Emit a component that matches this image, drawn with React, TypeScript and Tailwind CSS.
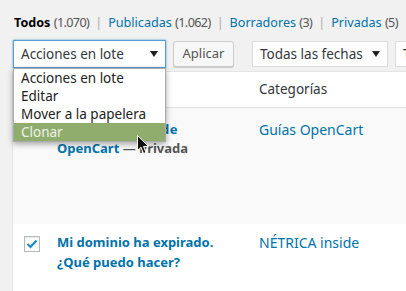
import React from 'react';

const font = { fontFamily: '"Noto Sans", "Open Sans", sans-serif' };

function Caret() {
  return (
    <svg width="8" height="6" viewBox="0 0 8 6" className="shrink-0">
      <path d="M0 0 L8 0 L4 6 Z" fill="#222" />
    </svg>
  );
}

function Cursor() {
  return (
    <svg width="13" height="20" viewBox="0 0 13 20" className="absolute left-[137px] top-[135px]">
      <path
        d="M0.5 0.5 L0.5 15.5 L4 12.2 L6.6 18.5 L9 17.5 L6.5 11.5 L11.5 11.5 Z"
        fill="#111"
        stroke="#fff"
        strokeWidth="1"
        strokeLinejoin="round"
      />
    </svg>
  );
}

const actions = ['Acciones en lote', 'Editar', 'Mover a la papelera', 'Clonar'];

export default function App() {
  return (
    <div className="relative w-[406px] h-[291px] overflow-hidden bg-[#f1f1f1] text-[#32373c]" style={font}>
      {/* Status filters */}
      <div className="pt-[14px] pl-[14px] h-[32px] text-[12.6px] leading-[18px] whitespace-nowrap">
        <span className="font-bold text-black">Todos</span> <span className="text-[#555] tracking-[-0.6px]">(1.070)</span>
        <span className="text-[#aaa] mx-[6px]">|</span>
        <span className="text-[#0073aa]">Publicadas <span className="text-[#555] tracking-[-0.6px]">(1.062)</span></span>
        <span className="text-[#aaa] mx-[6px]">|</span>
        <span className="text-[#0073aa]">Borradores <span className="text-[#555] tracking-[-0.6px]">(3)</span></span>
        <span className="text-[#aaa] mx-[6px]">|</span>
        <span className="text-[#0073aa]">Privadas <span className="text-[#555] tracking-[-0.6px]">(5)</span></span>
      </div>

      {/* Bulk actions bar */}
      <div className="mt-[8px] flex items-center pl-[13px] whitespace-nowrap">
        <div className="shrink-0 w-[153px] h-[28px] flex items-center justify-between pl-[7px] pr-[7px] bg-white border border-[#5b9dd9] shadow-[0_0_2px_rgba(30,140,190,0.8)] text-[13.5px] text-[#32373c]">
          <span>Acciones en lote</span>
          <Caret />
        </div>
        <div className="shrink-0 ml-[7px] w-[61px] h-[26px] flex items-center justify-center bg-[#f7f7f7] border border-[#ccc] rounded-[3px] shadow-[0_1px_0_#ccc] text-[13px] text-[#555]">
          Aplicar
        </div>
        <div className="shrink-0 ml-[18px] w-[136px] h-[26px] flex items-center justify-between pl-[7px] pr-[7px] bg-white border border-[#ddd] text-[13.5px] text-[#32373c]">
          <span>Todas las fechas</span>
          <Caret />
        </div>
        <div className="shrink-0 ml-[7px] w-[60px] h-[26px] flex items-center pl-[7px] bg-white border border-[#ddd] text-[13.5px]">
          T
        </div>
      </div>

      {/* Posts table */}
      <div className="mt-[3px] ml-[12px] w-[420px] bg-white border-l border-t border-[#e5e5e5]">
        <div className="h-[36px] flex items-center border-b border-[#e1e1e1] text-[13.5px] text-[#32373c]">
          <div className="shrink-0 w-[234px]" />
          <div className="pl-[12px]">Categorías</div>
        </div>
        <div className="h-[116px] flex bg-[#f9f9f9] pt-[12px]">
          <div className="shrink-0 w-[44px]" />
          <div className="shrink-0 w-[190px] text-[13px] leading-[19px] font-bold text-[#0073aa]">
            <span className="tracking-[0.4px]">Instalar temas de</span>
            <br />
            OpenCart <span className="text-[#555]">— Privada</span>
          </div>
          <div className="pl-[12px] text-[14px] leading-[19px] text-[#0073aa]">Guías OpenCart</div>
        </div>
        <div className="h-[80px] flex bg-white pt-[8px]">
          <div className="shrink-0 w-[44px] pl-[11px] pt-[4px]">
            <div className="w-[16px] h-[16px] border border-[#b4b9be] bg-white flex items-center justify-center shadow-[inset_0_1px_2px_rgba(0,0,0,0.1)]">
              <svg width="12" height="10" viewBox="0 0 12 10">
                <path d="M1.5 5 L4.5 8 L10.5 1.5" fill="none" stroke="#1e8cbe" strokeWidth="2.2" />
              </svg>
            </div>
          </div>
          <div className="shrink-0 w-[190px] text-[13px] leading-[20px] font-bold text-[#0073aa]">
            Mi dominio ha expirado.
            <br />
            ¿Qué puedo hacer?
          </div>
          <div className="pl-[12px] pt-[1px] text-[14px] leading-[19px] text-[#0073aa]">NÉTRICA inside</div>
        </div>
      </div>

      {/* Open bulk actions list */}
      <div className="absolute left-[13px] top-[68px] w-[153px] bg-white border border-[#aaa] shadow-[0_2px_6px_rgba(0,0,0,0.35)] text-[13.5px] leading-[18px] whitespace-nowrap">
        {actions.map((a) => (
          <div
            key={a}
            className={a === 'Clonar' ? 'h-[18px] pl-[7px] bg-[#90ad6d] text-[#eef2e8]' : 'h-[18px] pl-[7px] text-[#222]'}
          >
            {a}
          </div>
        ))}
      </div>

      <Cursor />
    </div>
  );
}
